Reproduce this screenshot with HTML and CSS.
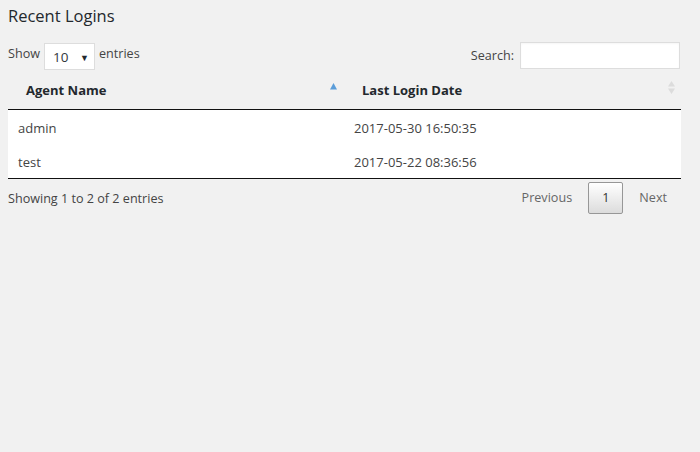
FILE: index.html
```html
<!DOCTYPE html>
<html>
<head>
<meta charset="utf-8">
<link rel="stylesheet" href="styles.css">
</head>
<body>
<div class="wrap">
  <h2 class="title">Recent Logins</h2>
  <div class="top">
    <label class="length">Show
      <span class="select"><span class="val">10</span><span class="caret">▼</span></span>
      entries</label>
    <label class="search">Search: <span class="input"></span></label>
  </div>
  <table class="grid">
    <colgroup><col class="c1"><col class="c2"></colgroup>
    <thead>
      <tr>
        <th>Agent Name
          <svg class="sort asc" width="7" height="7" viewBox="0 0 7 7"><path d="M3.5 0 L7 6.5 L0 6.5 Z" fill="#5b9dd9"/></svg>
        </th>
        <th>Last Login Date
          <svg class="sort both" width="7" height="13" viewBox="0 0 7 13"><path d="M3.5 0 L7 5.5 L0 5.5 Z M3.5 13 L7 7.5 L0 7.5 Z" fill="#dcdcdc"/></svg>
        </th>
      </tr>
    </thead>
    <tbody>
      <tr><td>admin</td><td>2017-05-30 16:50:35</td></tr>
      <tr><td>test</td><td>2017-05-22 08:36:56</td></tr>
    </tbody>
  </table>
  <div class="bottom">
    <div class="info">Showing 1 to 2 of 2 entries</div>
    <div class="pager">
      <span class="pbtn off">Previous</span>
      <span class="pbtn cur">1</span>
      <span class="pbtn off">Next</span>
    </div>
  </div>
</div>
</body>
</html>
```
FILE: styles.css
```css
html, body {
  margin: 0;
  padding: 0;
  background: #f1f1f1;
}
body {
  font-family: "Open Sans", "Noto Sans", sans-serif;
  font-size: 12.6px;
  color: #444;
}
.wrap {
  width: 673px;
  padding: 0 8px;
}
.title {
  margin: 0;
  padding-top: 4px;
  font-size: 16.5px;
  font-weight: 400;
  color: #23282d;
  line-height: 24px;
}
.top {
  display: flex;
  justify-content: space-between;
  align-items: flex-start;
  margin-top: 14px;
}
.length {
  display: flex;
  align-items: center;
  gap: 4px;
  height: 28px;
  margin-top: -3px;
  align-self: flex-start;
}
.select {
  display: inline-flex;
  align-items: center;
  justify-content: space-between;
  box-sizing: border-box;
  width: 51px;
  height: 27px;
  margin-top: 6px;
  padding: 2px 5px 0 8px;
  background: #fff;
  border: 1px solid #ddd;
  color: #32373c;
  font-size: 13.5px;
}
.caret {
  font-size: 9px;
  color: #23282d;
}
.search {
  display: flex;
  align-items: center;
  gap: 6px;
  margin-right: 1px;
  color: #444;
}
.input {
  display: block;
  box-sizing: border-box;
  width: 160px;
  height: 27px;
  background: #fff;
  border: 1px solid #ddd;
  box-shadow: inset 0 1px 2px rgba(0,0,0,.04);
}
.grid {
  width: 673px;
  border-collapse: collapse;
  border-spacing: 0;
  margin-top: 1px;
}
.c1 { width: 336px; }
.c2 { width: 337px; }
.grid th {
  position: relative;
  text-align: left;
  font-weight: 700;
  font-size: 13px;
  color: #23282d;
  padding: 11px 18px 9px 18px;
  height: 19px;
  line-height: 19px;
  border-bottom: 1px solid #111;
}
.grid td {
  background: #fff;
  padding: 9px 10px 7px;
  line-height: 18px;
  font-size: 13px;
  color: #444;
}
.grid tbody tr:last-child td {
  border-bottom: 1px solid #111;
}
.sort {
  position: absolute;
  display: block;
}
.sort.asc { right: 7px; top: 13px; }
.sort.both { right: 6px; top: 11px; }
.bottom {
  display: flex;
  justify-content: space-between;
  align-items: flex-start;
}
.info {
  padding-top: 11px;
  line-height: 18px;
}
.pager {
  display: flex;
  align-items: center;
  padding-top: 3px;
}
.pbtn {
  box-sizing: border-box;
  padding: 6px 13px;
  margin-left: 2px;
  line-height: 18px;
  text-align: center;
  border: 1px solid transparent;
  border-radius: 2px;
  color: #666;
}
.pbtn.cur {
  color: #333;
  border-color: #979797;
  background: linear-gradient(to bottom, #fff 0%, #dcdcdc 100%);
}
```
